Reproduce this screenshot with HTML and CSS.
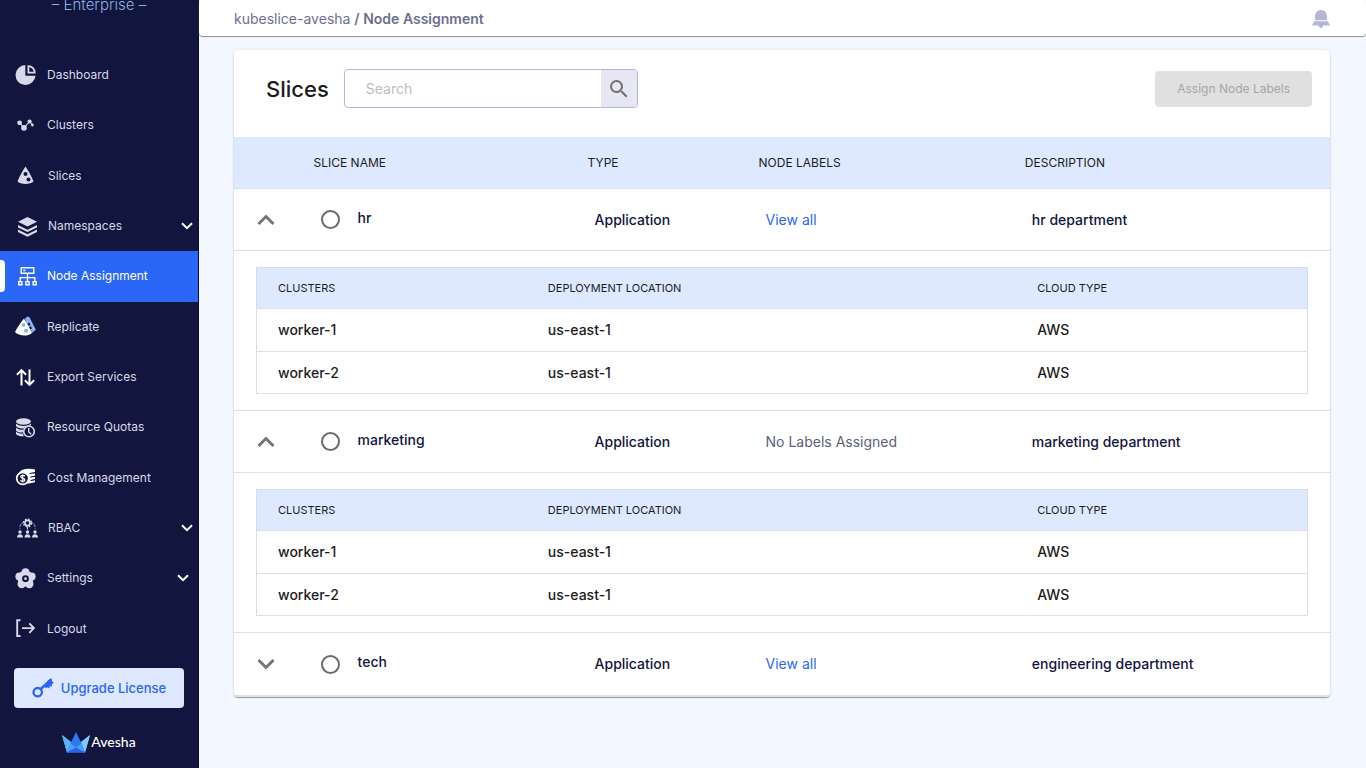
FILE: index.html
```html
<!DOCTYPE html>
<html lang="en">
<head>
<meta charset="utf-8">
<meta name="viewport" content="width=device-width, initial-scale=1">
<title>Node Assignment</title>
<link rel="stylesheet" href="styles.css">
</head>
<body>
<div class="app">
  <aside class="sidebar">
    <div class="edition"><span>– Enterprise –</span></div>
    <nav class="nav">
      <a class="nav-item" href="#"><svg class="icon" viewBox="0 0 21 21"><path fill="currentColor" d="M10.500 0A10 10 0 1 0 20.500 10.500h-10z"/><path fill="none" stroke="#12153d" stroke-width="1.200" d="M11.200 0v9.800H21"/><path fill="none" stroke="currentColor" stroke-width="1.800" d="M13.400 1.200v6.400h6.300c0-3.500-2.600-6.400-6.300-6.400z"/></svg>Dashboard</a>
      <a class="nav-item" href="#"><svg class="icon" viewBox="0 0 21 21"><g fill="currentColor"><circle cx="4.600" cy="7.800" r="2.400"/><circle cx="9" cy="12.800" r="2.900"/><circle cx="14.600" cy="6.500" r="2.100"/><circle cx="17.400" cy="10" r="1.400"/></g><path d="M4.600 7.800 9 12.800l5.600-6.300 2.800 3.500" fill="none" stroke="currentColor" stroke-width="1.100"/></svg>Clusters</a>
      <a class="nav-item nudge" href="#"><svg class="icon" viewBox="0 0 21 21"><path fill="currentColor" d="M10.500 1.500c2.600 4 5.800 9.400 8 14.700-2.600 3.700-13.500 3.700-16 0C4.700 11 7.700 5.500 10.500 1.500z"/><circle cx="10.500" cy="9" r="2" fill="#12153d"/><circle cx="13.500" cy="14.600" r="2" fill="#12153d"/></svg>Slices</a>
      <a class="nav-item wide" href="#"><svg class="icon" viewBox="0 0 21 21"><path fill="currentColor" d="m10.500 1 9.500 4.700-9.500 4.700L1 5.700zM1 9l9.500 4.700L20 9v2.400l-9.500 4.700L1 11.400zM1 13.600l9.500 4.700 9.500-4.700v2.400L10.500 20.700 1 16z"/></svg>Namespaces<svg class="caret" viewBox="0 0 12 8"><path d="M1 1.200 6 6.200l5-5"/></svg></a>
      <a class="nav-item wide active" href="#" aria-current="page"><svg class="icon" viewBox="0 0 21 21"><g fill="none" stroke="currentColor" stroke-width="1.400"><path d="M4.200 1.700h12.600v5.600H4.200zM10.500 7.300v8M3.200 15.300v-3.700h14.600v3.700"/><path d="M1.700 15.700h3.200v3H1.700zM8.900 15.700h3.200v3H8.900zM16.100 15.700h3.200v3h-3.200z"/></g><path fill="currentColor" d="M6.300 3.700h2v1.600h-2z"/></svg>Node Assignment</a>
      <a class="nav-item" href="#"><svg class="icon" viewBox="0 0 21 21"><path fill="#8fb2f7" d="m10 2.500 2.500-2 2 .8 6.300 12.400-4.800 4z"/><path fill="#fff" d="M9 2.500c2.700 4.100 5.700 9.800 7.500 14.700-3.300 3.600-13.400 2.800-16.500-1.200C2.500 11 5.900 6 9 2.500z"/><path d="m13.500 7 3.300 7.500" fill="none" stroke="#12153d" stroke-width="2" stroke-dasharray="2.500 1.500"/><g fill="#8fb2f7"><circle cx="8.500" cy="9" r="1.900"/><circle cx="11" cy="14.800" r="2.100"/></g></svg>Replicate</a>
      <a class="nav-item" href="#"><svg class="icon bright" viewBox="0 0 21 21"><g fill="none" stroke="currentColor" stroke-width="2"><path d="M6.500 18.500V4M1.900 7.700l4.600-4.600 4.600 4.600M14.500 2.500V17M9.900 13.300l4.600 4.600 4.600-4.600"/></g></svg>Export Services</a>
      <a class="nav-item" href="#"><svg class="icon" viewBox="0 0 21 21"><g fill="currentColor"><ellipse cx="8.500" cy="4.500" rx="7.500" ry="3.300"/><path d="M1 6.500c2.500 3.200 12.500 3.200 15 0v2c-3.600 0-6 1-7.300 3.100C5.500 11.600 2.200 11 1 9.100z"/><path d="M1 10.700c1.300 1.300 3.700 2 7 2.100l-.2 2.800C4.500 15.600 2 15 1 13.400zM1 14.800c1.500 1.300 3.800 1.900 6.800 1.900l1 2.600C4.600 19.300 2 18.700 1 17z"/></g><circle cx="14" cy="14.500" r="5.300" fill="#12153d" stroke="currentColor" stroke-width="1.600"/><path d="M13.700 11v4l2.600 2.300" fill="none" stroke="currentColor" stroke-width="1.400"/></svg>Resource Quotas</a>
      <a class="nav-item" href="#"><svg class="icon bright" viewBox="0 0 21 21"><path fill="currentColor" d="M4 6c2-4 9-5 16-3.600v2.800l-4 .9 4 .2v2.500l-5 .9 5 .2v2.400l-5 .9 5 .1V15c-3 1.300-7 1.800-11 1.300z"/><circle cx="7.700" cy="11.300" r="6" fill="#12153d" stroke="currentColor" stroke-width="1.700"/><path d="M10 9.200C9 8 5.700 8 5.700 9.800c0 2 4.200 1.100 4.200 3.100 0 1.800-3.500 1.800-4.500.4M7.700 7.300v8.100" fill="none" stroke="currentColor" stroke-width="1.200"/><path d="M14.500 6.600 20 5.700M15.500 10.100l4.500-.8M15.500 13.500l4.500-.8" stroke="#12153d"/></svg>Cost Management</a>
      <a class="nav-item wide" href="#"><svg class="icon" viewBox="0 0 21 21"><circle cx="10.500" cy="5" r="2.600" fill="none" stroke="currentColor" stroke-width="1.600"/><circle cx="10.500" cy="5" r="3.900" fill="none" stroke="currentColor" stroke-width="1.400" stroke-dasharray="1.700 1.360"/><path d="M7 4.500C3.800 5 2.800 7.500 2.800 10.500M14 4.500c3.200.5 4.200 3 4.200 6M10.500 9v3" fill="none" stroke="currentColor" stroke-dasharray="2.500 1.200"/><g fill="currentColor"><circle cx="3" cy="14" r="1.700"/><circle cx="10.500" cy="14" r="1.700"/><circle cx="18" cy="14" r="1.700"/><path d="M0 19.500c0-4.300 6-4.300 6 0zM7.500 19.500c0-4.300 6-4.300 6 0zM15 19.500c0-4.300 6-4.300 6 0z"/></g></svg>RBAC<svg class="caret" viewBox="0 0 12 8"><path d="M1 1.200 6 6.200l5-5"/></svg></a>
      <a class="nav-item settings" href="#"><svg class="icon" viewBox="0 0 21 21"><g fill="currentColor"><circle cx="10.500" cy="10.500" r="8"/><circle cx="10.500" cy="4.200" r="3.900"/><circle cx="16.600" cy="8.500" r="4"/><circle cx="14.300" cy="16" r="4.200"/><circle cx="6.700" cy="16" r="4.200"/><circle cx="4.400" cy="8.500" r="4"/></g><circle cx="10.500" cy="10.700" r="2.400" fill="#d8d9ea" stroke="#12153d" stroke-width="2"/></svg>Settings<svg class="caret" viewBox="0 0 12 8"><path d="M1 1.200 6 6.200l5-5"/></svg></a>
      <a class="nav-item" href="#"><svg class="icon" viewBox="0 0 21 21"><path d="M5.500 2.200H2.200v15.800h3.300M7 10.100h11.500M14.300 5.400l4.600 4.700-4.600 4.700" fill="none" stroke="currentColor" stroke-width="1.900"/></svg>Logout</a>
    </nav>
    <button class="upgrade" type="button"><svg class="key" viewBox="0 0 22 20"><circle cx="5.700" cy="14.200" r="4.200" fill="none" stroke="currentColor" stroke-width="2.300"/><path d="M8.500 11.300 19 1.600" fill="none" stroke="currentColor" stroke-width="2.600"/><path fill="currentColor" d="m16.500 2 3-2 .6 3.200L22 5l-2.200 1 .2 2.700-2.200-.6-.3 2.400-2-1.200-1.500 1-2-2.300z"/></svg>Upgrade License</button>
    <div class="brand"><svg class="crown" viewBox="0 0 28 21"><path fill="#82cafa" d="M0 3 8.500 10 5 20.500z"/><path fill="#5cb4f8" d="m0 3 10.500 8L6 20.500H5z"/><path fill="#5cb4f8" d="m28 3-10.500 8L22 20.500h1z"/><path fill="#82cafa" d="m28 3-8.500 7L23 20.500z"/><path fill="#2f78f1" d="M14 0 8.500 11.500 5 20.500h18l-3.500-9z"/><path fill="#48a0f7" d="m8.500 11.500 5.500 4-9 5zM19.500 11.500l-5.500 4 9 5z"/><path fill="#2a62ea" d="m14 15.500 9 5H5z"/></svg><span>Avesha</span></div>
  </aside>
  <div class="page">
    <header class="topbar">
      <div class="crumbs"><a href="#">kubeslice-avesha</a> <b>/ Node Assignment</b></div>
      <button class="bell" type="button" aria-label="Notifications"><svg viewBox="0 0 18 18"><path fill="currentColor" d="M3 10.300V6.500C3 2.800 5.500 0 9 0s6 2.800 6 6.500v3.800zM2.300 11.300h13.400L18 15.500H0zM6.800 15.500h4.400C11 18.800 7 18.800 6.800 15.500z"/></svg></button>
    </header>
    <main class="card">
      <div class="toolbar">
        <h1>Slices</h1>
        <form class="search">
          <input type="text" placeholder="Search" aria-label="Search">
          <button type="button" aria-label="Search"><svg viewBox="3 3 18 18"><path fill="currentColor" d="M15.500 14h-.79l-.28-.27A6.470 6.470 0 0 0 16 9.500 6.500 6.500 0 1 0 9.500 16c1.610 0 3.090-.59 4.230-1.570l.27.28v.79l5 4.990L20.490 19l-4.990-5zm-6 0C7.010 14 5 11.990 5 9.500S7.010 5 9.500 5 14 7.010 14 9.500 11.990 14 9.500 14z"/></svg></button>
        </form>
        <button class="assign" type="button" disabled>Assign Node Labels</button>
      </div>
      <table class="slices">
        <colgroup><col class="c-toggle"><col class="c-name"><col class="c-type"><col class="c-labels"><col></colgroup>
        <thead><tr><th></th><th>SLICE NAME</th><th>TYPE</th><th>NODE LABELS</th><th>DESCRIPTION</th></tr></thead>
        <tbody>
          <tr class="slice">
            <td><button class="toggle" type="button" aria-label="Collapse hr" aria-expanded="true"><svg viewBox="0 0 18 12"><path d="m1.500 10 7.500-7.500 7.500 7.500"/></svg></button></td>
            <td><label class="pick"><input type="radio" name="slice"><span>hr</span></label></td>
            <td>Application</td><td><a class="view" href="#">View all</a></td><td>hr department</td>
          </tr>
          <tr><td class="detail" colspan="5">
            <table class="clusters">
              <colgroup><col class="k-cluster"><col class="k-location"><col></colgroup>
              <thead><tr><th>CLUSTERS</th><th>DEPLOYMENT LOCATION</th><th>CLOUD TYPE</th></tr></thead>
              <tbody><tr><td>worker-1</td><td>us-east-1</td><td>AWS</td></tr><tr><td>worker-2</td><td>us-east-1</td><td>AWS</td></tr></tbody>
            </table>
          </td></tr>
          <tr class="slice">
            <td><button class="toggle" type="button" aria-label="Collapse marketing" aria-expanded="true"><svg viewBox="0 0 18 12"><path d="m1.500 10 7.500-7.500 7.500 7.500"/></svg></button></td>
            <td><label class="pick"><input type="radio" name="slice"><span>marketing</span></label></td>
            <td>Application</td><td><span class="none">No Labels Assigned</span></td><td>marketing department</td>
          </tr>
          <tr><td class="detail" colspan="5">
            <table class="clusters">
              <colgroup><col class="k-cluster"><col class="k-location"><col></colgroup>
              <thead><tr><th>CLUSTERS</th><th>DEPLOYMENT LOCATION</th><th>CLOUD TYPE</th></tr></thead>
              <tbody><tr><td>worker-1</td><td>us-east-1</td><td>AWS</td></tr><tr><td>worker-2</td><td>us-east-1</td><td>AWS</td></tr></tbody>
            </table>
          </td></tr>
          <tr class="slice">
            <td><button class="toggle" type="button" aria-label="Expand tech" aria-expanded="false"><svg viewBox="0 0 18 12"><path d="m1.500 2 7.500 7.500L16.500 2"/></svg></button></td>
            <td><label class="pick"><input type="radio" name="slice"><span>tech</span></label></td>
            <td>Application</td><td><a class="view" href="#">View all</a></td><td>engineering department</td>
          </tr>
        </tbody>
      </table>
    </main>
  </div>
</div>
</body>
</html>
```
FILE: styles.css
```css
* { box-sizing: border-box; }
body { margin: 0; background: #f3f7ff; color: #1c1c1c; font: 14px/20px Inter, "Liberation Sans", sans-serif; }
a { color: inherit; text-decoration: none; }
button, input { font: inherit; margin: 0; }
button { border: 0; padding: 0; cursor: pointer; }
svg { display: block; flex: none; }

.app { display: flex; min-height: 100vh; }

.sidebar { width: 199px; flex: none; height: 100vh; display: flex; flex-direction: column; background: #12153d; overflow: hidden; border-right: 1px solid #0b0d2e; }
.edition { height: 50px; display: flex; justify-content: center; color: #8fb0e0; font-size: 15px; font-weight: 300; overflow: hidden; }
.edition span { margin-top: -5px; }
.nav { flex: 1; display: grid; grid-auto-rows: 1fr; }
.nav-item { display: flex; align-items: center; gap: 11px; padding: 0 5px 0 15px; color: #d8d9ea; font-size: 12px; }
.nav-item.nudge { gap: 12px; }
.nav-item.wide { padding-left: 17px; gap: 10px; }
.nav-item.settings { padding-right: 9px; }
.nav-item.active { background: #2a67f6; color: #fff; gap: 9px; position: relative; }
.nav-item.active::before { content: ""; position: absolute; left: 0; top: 9px; bottom: 10px; width: 5px; background: #fff; border-radius: 0 4px 4px 0; }
.icon { width: 21px; height: 21px; }
.bright { color: #fff; }
.caret { width: 12px; height: 8px; margin-left: auto; fill: none; stroke: #fff; stroke-width: 2; }
.upgrade { height: 40px; margin: 14px 14px 20px; flex: none; display: flex; align-items: center; justify-content: center; gap: 7px; background: #dee8ff; color: #2a67f6; border-radius: 4px; font-size: 13px; font-weight: 500; }
.key { width: 22px; height: 20px; }
.brand { display: flex; justify-content: center; align-items: center; gap: 1px; height: 40px; padding-bottom: 12px; color: #fff; font: 500 14px/20px Lato, sans-serif; }
.crown { width: 28px; height: 21px; }

.page { flex: 1; min-width: 0; }
.topbar { display: flex; align-items: center; justify-content: space-between; height: 36px; padding: 2px 36px 0 35px; background: #fff; border-radius: 4px; box-shadow: 0 1px 1px #8b8d9b; }
.crumbs { color: #6d6f8f; }
.crumbs b { font-weight: 600; }
.bell { width: 18px; height: 18px; background: none; color: #b4b5d7; }

.card { margin: 14px 36px 24px 35px; background: #fff; border-radius: 4px; box-shadow: 0 1px 1px #9a9ca6, 0 0 3px rgba(0, 0, 0, .12); overflow: hidden; }
.toolbar { display: flex; align-items: center; height: 87px; padding: 0 18px 10px 32px; }
h1 { margin: 0 15px 0 0; font-size: 22px; line-height: 28px; font-weight: 500; }
.search { display: flex; width: 294px; height: 39px; border: 1px solid #b4b5d7; border-radius: 4px; overflow: hidden; }
.search input { flex: 1; min-width: 0; border: 0; padding: 0 21px; background: none; outline: 0; }
.search input::placeholder { color: #bdbdbd; opacity: 1; }
.search button { width: 36px; display: grid; place-items: center; background: #e6e7f3; color: #707070; }
.search svg { width: 18px; height: 18px; }
.assign { margin-left: auto; height: 36px; padding: 0 22px; background: #e0e0e0; color: #a6a6a6; border-radius: 4px; font-size: 12px; }

table { width: 100%; table-layout: fixed; border-collapse: separate; border-spacing: 0; }
th, td { text-align: left; border-bottom: 1px solid #e0e0e0; }
.slices > thead th { height: 52px; padding: 0 16px; background: #dee8ff; font-size: 12px; font-weight: 400; }
.c-toggle { width: 5.8%; }
.c-name { width: 25%; }
.c-type { width: 15.6%; }
.c-labels { width: 24.3%; }
.slice td { height: 62px; padding: 0 23px; font-weight: 500; color: #12153d; }
.slice:last-child td { height: 64px; border-bottom-width: 2px; }
.toggle { display: block; background: none; }
.toggle svg { width: 18px; height: 12px; fill: none; stroke: #757575; stroke-width: 3; }
.pick { display: flex; align-items: center; gap: 18px; }
.pick span { padding-bottom: 4px; }
.pick input { appearance: none; width: 19px; height: 19px; border: 2px solid #6b6b6b; border-radius: 50%; }
.pick input:checked { background: radial-gradient(#2a67f6 50%, transparent 55%); }
.slice .view { color: #2a67f6; font-weight: 400; }
.slice .none { color: #5d5f7e; font-weight: 400; }
.slices .detail { padding: 16px 22px; }

.clusters { border: 1px solid #d8dcec; border-bottom: 0; }
.clusters th { height: 41px; padding: 0 21px; background: #dee8ff; font-size: 11px; font-weight: 400; }
.clusters td { height: 43px; padding: 0 21px; font-weight: 500; }
.clusters tr:last-child td { height: 42px; }
.k-cluster { width: 25.7%; }
.k-location { width: 46.6%; }
```
